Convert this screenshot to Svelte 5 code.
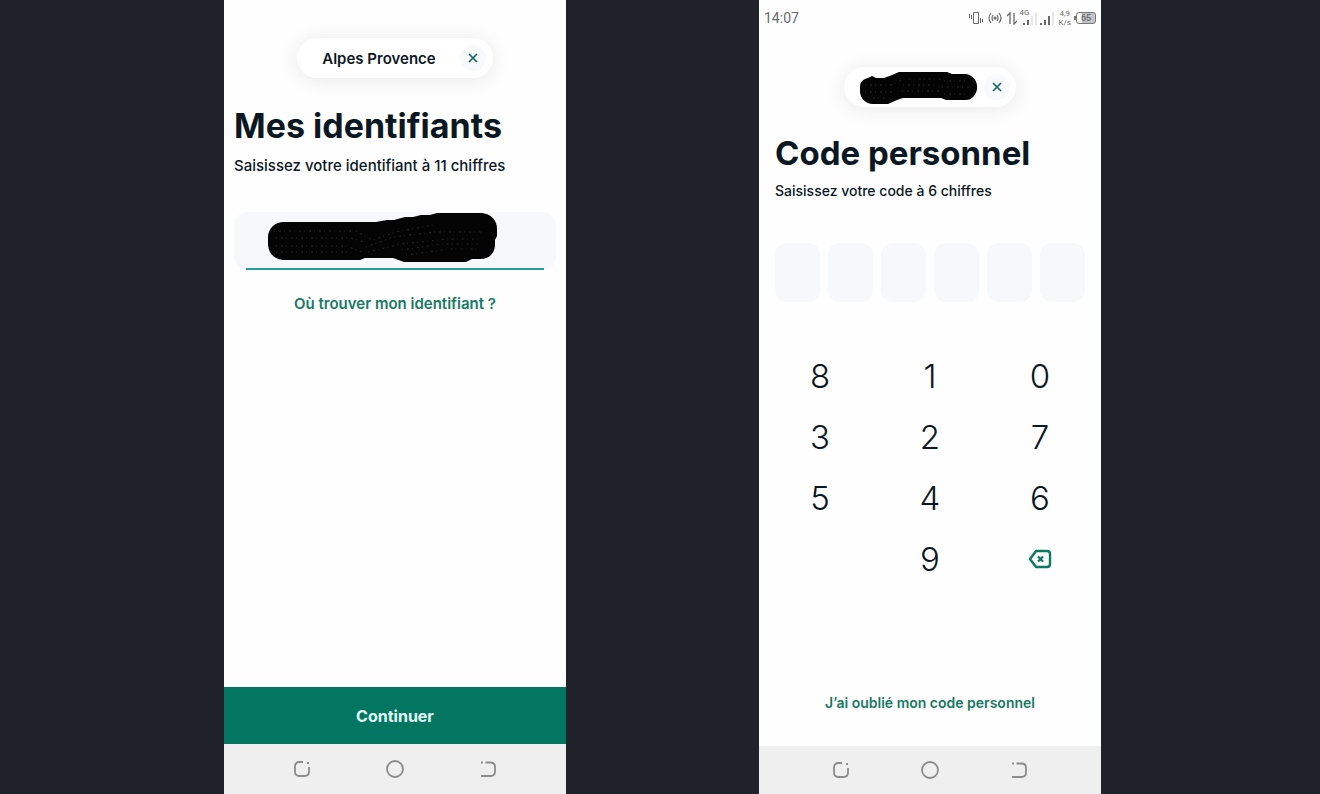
<!--
  Login screens
  Identifier step and personal code step, side by side
-->
<script lang="ts">
  const keys = ["8", "1", "0", "3", "2", "7", "5", "4", "6", "", "9"];
  const codeLength = 6;

  let identifier = $state("");
  let code = $state("");

  function press(key: string) {
    if (code.length < codeLength) code += key;
  }

  function erase() {
    code = code.slice(0, -1);
  }
</script>

{#snippet closeIcon()}
  <svg width="10" height="10" viewBox="0 0 10 10" aria-hidden="true">
    <path d="M1 1L9 9M9 1L1 9" fill="none" stroke="#17666a" stroke-width="1.7" />
  </svg>
{/snippet}

{#snippet navBar()}
  <nav class="nav-bar" aria-label="Navigation">
    <button type="button" aria-label="Applications">
      <svg width="18" height="18" viewBox="0 0 18 18">
        <path d="M10 2H6.500Q2 2 2 6.500V11.500Q2 16 6.500 16H11.500Q16 16 16 11.500V7" />
        <path d="M14 3H16" />
      </svg>
    </button>
    <button type="button" aria-label="Accueil">
      <svg width="18" height="18" viewBox="0 0 18 18">
        <circle cx="9" cy="9" r="8" />
      </svg>
    </button>
    <button type="button" aria-label="Retour">
      <svg width="18" height="18" viewBox="0 0 18 18">
        <path d="M2 2.500H4M6.500 2.500H11.500Q16 2.500 16 7V11.500Q16 16 11.500 16H2" />
      </svg>
    </button>
  </nav>
{/snippet}

<main class="screens">
  <section class="screen screen-identifier" aria-label="Identifiant">
    <div class="pill">
      <span class="pill-name">Alpes Provence</span>
      <button class="pill-close" type="button" aria-label="Fermer">{@render closeIcon()}</button>
    </div>

    <h1>Mes identifiants</h1>
    <label class="hint" for="identifier">Saisissez votre identifiant à 11 chiffres</label>

    <div class="field">
      <input id="identifier" inputmode="numeric" maxlength="11" bind:value={identifier} />
      <svg class="field-mask" width="230" height="50" viewBox="0 0 230 50" aria-hidden="true">
        <path d="M16 9H108L119 7L126 7L137 4H145L153 2H162L169 0H214C224 1 229 8 229 16V23L227 27V33C226 41 221 46 212 46H204L198 49H136L125 45H97L92 47H15C6 46 1 41 0 32V23C1 15 7 9 16 9Z" fill="#040405" />
        <path d="M6 18H84M8 25L82 25L96 29M8 33H78L94 39M8 39H82M88 18L104 27L128 19L166 12M98 34L125 24L166 19H214M100 39L133 31L180 26H211M134 37L174 31H210M138 42L182 36H208" fill="none" stroke="#26262a" stroke-dasharray="1 4 2 3" />
      </svg>
    </div>

    <a class="link" href="#aide">Où trouver mon identifiant ?</a>

    <button class="submit" type="button">Continuer</button>
    {@render navBar()}
  </section>

  <section class="screen screen-code" aria-label="Code personnel">
    <header class="status-bar">
      <time>14:07</time>
      <div class="status-icons">
        <svg width="14" height="14" viewBox="0 0 14 14" aria-hidden="true">
          <path d="M4.500 1.500H9.500V12.500H4.500ZM2.500 4V8M.5 3V7M11.500 7V12M13.500 8V11" fill="none" stroke="#68686b" />
        </svg>
        <svg width="14" height="12" viewBox="0 0 14 12" aria-hidden="true">
          <path d="M3 1Q-1 6 3 11M5 3Q3 6 5 9M9 3Q11 6 9 9M11 1Q15 6 11 11" fill="none" stroke="#68686b" stroke-width="1.200" />
          <circle cx="7" cy="6" r="1.500" fill="#68686b" />
        </svg>
        <svg width="10" height="13" viewBox="0 0 10 13" aria-hidden="true">
          <path d="M3 12V1L0 4M7 1V12L10 9" fill="none" stroke="#68686b" stroke-width="1.300" />
        </svg>
        <div class="network">
          <span>4G</span>
          <svg width="32" height="13" viewBox="0 0 32 13" aria-hidden="true">
            <path d="M2 11V13M6 8V13M19 11V13M23 8V13M27 4V13" stroke="#68686b" stroke-width="2" />
            <path d="M10 4V13M14 1V13M31 0V13" stroke="#d2d2d4" />
          </svg>
        </div>
        <div class="speed"><span>4,9</span><span>K/s</span></div>
        <div class="battery">65</div>
      </div>
    </header>

    <div class="pill">
      <svg width="118" height="34" viewBox="0 -1 118 34" aria-hidden="true">
        <path d="M8 7L12 5L16 7H24L32 4L39 1H87L92 3H106C112 4 117 9 117 15V18C116 24 112 29 106 29H86L81 27H43L37 29L28 33H12C4 32 0 26 0 20V16C0 11 3 8 8 7Z" fill="#040405" />
        <path d="M5 14H31L44 8H82M5 21H34M8 27H24M43 14H78M42 20H80M84 10H109M82 16H112M84 23H109" fill="none" stroke="#26262a" stroke-dasharray="1 4 2 3" />
      </svg>
      <button class="pill-close" type="button" aria-label="Fermer">{@render closeIcon()}</button>
    </div>

    <h1>Code personnel</h1>
    <p class="hint">Saisissez votre code à 6 chiffres</p>

    <div class="cells">
      {#each { length: codeLength } as _, i}
        <span class="cell">{i < code.length ? "•" : ""}</span>
      {/each}
    </div>

    <div class="keypad">
      {#each keys as key}
        {#if key}
          <button type="button" onclick={() => press(key)}>{key}</button>
        {:else}
          <span></span>
        {/if}
      {/each}
      <button type="button" aria-label="Effacer" onclick={erase}>
        <svg width="24" height="20" viewBox="0 0 24 20" aria-hidden="true">
          <path d="M8 2H19Q22 2 22 5V15Q22 18 19 18H8L2 10Z" fill="none" stroke="#0d7861" stroke-width="2.400" stroke-linejoin="round" />
          <path d="M10 7.500L15 12.500M15 7.500L10 12.500" stroke="#0d7861" stroke-width="2.200" />
        </svg>
      </button>
    </div>

    <a class="link" href="#oubli">J’ai oublié mon code personnel</a>
    {@render navBar()}
  </section>
</main>

<style>
  :global(body) {
    margin: 0;
    background: #1f2229;
  }

  .screens {
    display: grid;
    grid-template-columns: 224fr 342fr 193fr 342fr 219fr;
    min-height: 100vh;
    font-family: Inter, "Liberation Sans", sans-serif;
    color: #0b1823;
  }

  .screen {
    display: flex;
    flex-direction: column;
    background: #fefefe;
  }

  .screen-identifier {
    --gutter: 10px;
    grid-column: 2;
    padding-top: 38px;
  }

  .screen-code {
    --gutter: 16px;
    grid-column: 4;
  }

  button {
    display: flex;
    align-items: center;
    justify-content: center;
    padding: 0;
    border: 0;
    background: none;
    color: inherit;
    font: inherit;
    cursor: pointer;
  }

  .pill {
    display: flex;
    align-items: center;
    align-self: center;
    justify-content: space-between;
    gap: 6px;
    box-sizing: border-box;
    height: 40px;
    padding: 0 6px 0 16px;
    border-radius: 20px;
    background: #fff;
    box-shadow: 0 2px 20px rgb(0 0 0 / 9%);
  }

  .screen-identifier .pill {
    gap: 24px;
    padding: 0 7px 0 25px;
  }

  .pill-name {
    font-size: 15px;
    font-weight: 600;
  }

  .pill-close {
    width: 26px;
    height: 26px;
    border-radius: 50%;
    background: #f7f9fa;
  }

  h1 {
    margin: 28px var(--gutter) 0;
    font-size: 34px;
    font-weight: 700;
    line-height: 40px;
    white-space: nowrap;
  }

  .screen-code h1 {
    margin-top: 26px;
    font-size: 33px;
  }

  .hint {
    margin: 10px var(--gutter) 0;
    font-size: 15px;
    font-weight: 500;
    line-height: 20px;
  }

  .screen-code .hint {
    margin-top: 8px;
    font-size: 14px;
  }

  /* Identifier field */
  .field {
    position: relative;
    height: 58px;
    margin: 36px var(--gutter) 0;
    padding: 0 12px;
    border-radius: 14px;
    background: #f6f8fa;
  }

  .field input {
    box-sizing: border-box;
    width: 100%;
    height: 100%;
    padding: 0 20px;
    border: 0;
    border-bottom: 2px solid #2a9c9f;
    outline: 0;
    background: none;
    font: inherit;
  }

  .field-mask {
    position: absolute;
    top: 1px;
    left: 34px;
  }

  .link {
    align-self: center;
    margin-top: 24px;
    color: #177a62;
    font-size: 15px;
    font-weight: 600;
    line-height: 20px;
    text-decoration: none;
  }

  .screen-code .link {
    margin-top: auto;
    margin-bottom: 33px;
    font-size: 14px;
  }

  .submit {
    height: 57px;
    margin-top: auto;
    background: #037662;
    color: #e3fff8;
    font-size: 16px;
    font-weight: 700;
  }

  .nav-bar {
    display: flex;
    align-items: center;
    justify-content: center;
    gap: 75px;
    height: 50px;
    background: #efefef;
  }

  .screen-code .nav-bar {
    gap: 71px;
    height: 48px;
  }

  .nav-bar svg {
    fill: none;
    stroke: #8c8c8c;
    stroke-width: 1.8;
  }

  /* Phone status bar */
  .status-bar {
    display: flex;
    align-items: center;
    justify-content: space-between;
    height: 36px;
    margin-bottom: 31px;
    padding: 0 5px;
    color: #68686b;
    font-family: Roboto, sans-serif;
    font-size: 14px;
  }

  .status-icons {
    display: flex;
    align-items: center;
    gap: 5px;
  }

  .network {
    position: relative;
    display: flex;
  }

  .network span {
    position: absolute;
    top: -3px;
    left: -2px;
    font-size: 8px;
    line-height: 8px;
  }

  .speed {
    display: flex;
    flex-direction: column;
    align-items: center;
    font-size: 8px;
    line-height: 9px;
  }

  .battery {
    position: relative;
    box-sizing: border-box;
    width: 20px;
    height: 12px;
    border: 1px solid #77777a;
    border-radius: 3px;
    background: linear-gradient(90deg, #fff 30%, #c4c4c7 30%);
    font-size: 9px;
    font-weight: 500;
    line-height: 10px;
    text-align: center;
  }

  .battery::before {
    content: "";
    position: absolute;
    top: 3px;
    left: -3px;
    width: 2px;
    height: 4px;
    background: #77777a;
  }

  .cells {
    display: grid;
    grid-template-columns: repeat(6, 1fr);
    gap: 8px;
    margin: 42px var(--gutter) 0;
  }

  .cell {
    height: 59px;
    border-radius: 12px;
    background: #f6f8fa;
    font-size: 24px;
    line-height: 59px;
    text-align: center;
  }

  .keypad {
    display: grid;
    grid-template-columns: repeat(3, 1fr);
    grid-auto-rows: 61px;
    margin: 43px 6px 0;
    font-size: 33px;
    font-weight: 300;
  }
</style>
